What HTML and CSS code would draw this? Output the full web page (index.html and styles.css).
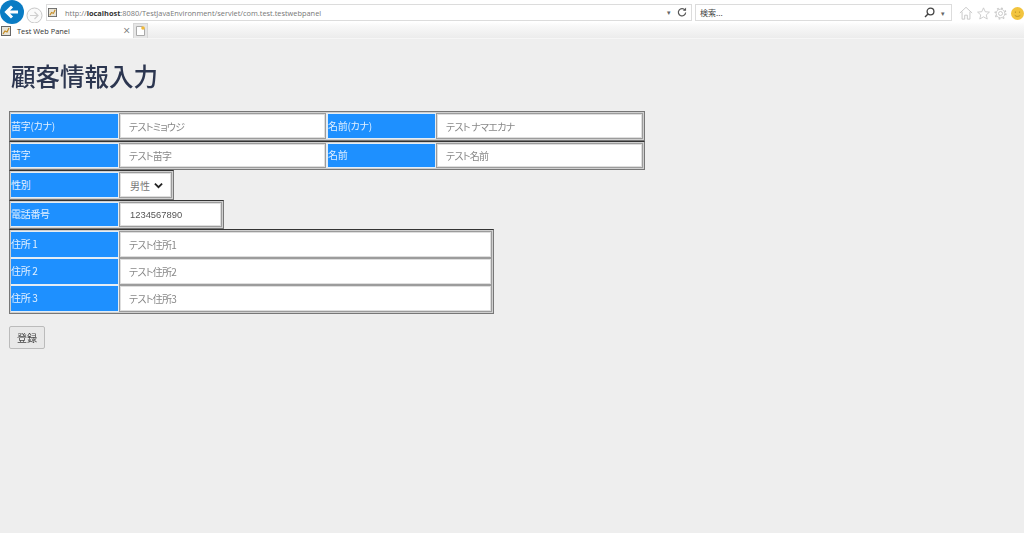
FILE: index.html
```html
<!DOCTYPE html>
<html lang="ja">
<head>
<meta charset="utf-8">
<title>Test Web Panel</title>
<link rel="stylesheet" href="styles.css">
</head>
<body>
<header class="chrome">
  <div class="navbar">
    <button class="back" aria-label="back"><svg width="24" height="24" viewBox="0 0 24 24"><circle cx="12" cy="12" r="12" fill="#0a7cc4"/><path d="M18 12H7.500M12 6.500L6.500 12l5.500 5.500" fill="none" stroke="#fff" stroke-width="3"/></svg></button>
    <span class="forward"><svg width="17" height="17" viewBox="0 0 17 17"><circle cx="8.500" cy="8.500" r="7.500" fill="#fafafa" stroke="#c8c8c8"/><path d="M4 8.500h8M8.500 5l3.500 3.500L8.500 12" fill="none" stroke="#cfcfcf" stroke-width="1.200"/></svg></span>
    <div class="address">
      <svg class="favicon" width="9" height="9" viewBox="0 0 10 10"><rect x=".5" y=".5" width="9" height="9" fill="#e8e4d8" stroke="#666"/><path d="M2 8l2-3 2 1 2-4" fill="none" stroke="#c58a20" stroke-width="1.200"/></svg>
      <span class="url">http://<b>localhost</b>:8080/TestJavaEnvironment/servlet/com.test.testwebpanel</span>
      <span class="caret">▾</span>
      <svg class="reload" width="10" height="11" viewBox="0 0 11 11"><path d="M8.800 3A4 4 0 1 0 9.500 5.500" fill="none" stroke="#555" stroke-width="1.300"/><path d="M6.500 3.500h3.500V0z" fill="#555"/></svg>
    </div>
    <div class="search">
      <span class="search-text">検索...</span>
      <svg width="11" height="11" viewBox="0 0 11 11"><circle cx="6.500" cy="4.500" r="3.400" fill="none" stroke="#444" stroke-width="1.300"/><path d="M4 7L1 10" stroke="#444" stroke-width="1.500"/></svg>
      <span class="caret">▾</span>
    </div>
    <div class="tools">
      <svg width="14" height="14" viewBox="0 0 16 16"><path d="M1 8l7-6.500L15 8M3.500 6.500V15h3v-4.500h3V15h3V6.500" fill="none" stroke="#c4c4c4"/></svg>
      <svg width="13" height="13" viewBox="0 0 16 16"><path d="M8 1l2.100 4.800 5.200.5-3.900 3.400 1.200 5.100L8 12.100l-4.600 2.700 1.200-5.100L.7 6.300l5.200-.5z" fill="none" stroke="#c4c4c4"/></svg>
      <svg width="13" height="13" viewBox="0 0 15 15"><circle cx="7.500" cy="7.500" r="2.300" fill="none" stroke="#c4c4c4"/><circle cx="7.500" cy="7.500" r="5" fill="none" stroke="#c4c4c4"/><circle cx="7.500" cy="7.500" r="6.300" fill="none" stroke="#c4c4c4" stroke-width="1.400" stroke-dasharray="2 2.950"/></svg>
      <svg width="13" height="13" viewBox="0 0 14 14"><circle cx="7" cy="7" r="7" fill="#f2c43e"/><circle cx="4.800" cy="5.500" r=".7" fill="#b08a20"/><circle cx="9.200" cy="5.500" r=".7" fill="#b08a20"/><path d="M4 9c1.500 1.500 4.500 1.500 6 0" fill="none" stroke="#b08a20" stroke-width=".8"/></svg>
    </div>
  </div>
  <div class="tabbar">
    <div class="tab">
      <svg width="10" height="10" viewBox="0 0 10 10"><rect x=".5" y=".5" width="9" height="9" fill="#e8e4d8" stroke="#666"/><path d="M2 8l2-3 2 1 2-4" fill="none" stroke="#c58a20" stroke-width="1.200"/></svg>
      <span class="tab-title">Test Web Panel</span>
      <span class="tab-close">×</span>
    </div>
    <div class="newtab"><svg width="9" height="10" viewBox="0 0 9 10"><path d="M.5.500h6l2 2v7h-8z" fill="#fff" stroke="#aaa"/><circle cx="7" cy="2" r="1.800" fill="#f0b93a"/></svg></div>
  </div>
</header>

<main class="page">
  <h1>顧客情報入力</h1>
  <form>
    <div class="group">
      <table>
        <tr>
          <th>苗字(カナ)</th><td><input class="w1" placeholder="テストミョウジ"></td>
          <th class="second">名前(カナ)</th><td><input class="w1" placeholder="テスト ナマエカナ"></td>
        </tr>
      </table>
      <table class="short">
        <tr>
          <th>苗字</th><td><input class="w1" placeholder="テスト苗字"></td>
          <th class="second">名前</th><td><input class="w1" placeholder="テスト名前"></td>
        </tr>
      </table>
      <table>
        <tr>
          <th>性別</th>
          <td><div class="select"><span>男性</span><svg width="9" height="7" viewBox="0 0 10 7"><path d="M1 1.300l4 4 4-4" fill="none" stroke="#222" stroke-width="2"/></svg></div></td>
        </tr>
      </table>
      <table class="short">
        <tr>
          <th>電話番号</th><td><input class="w2 filled" value="1234567890"></td>
        </tr>
      </table>
      <table class="stack">
        <tr><th>住所 1</th><td><input class="w3" placeholder="テスト住所1"></td></tr>
        <tr><th>住所 2</th><td><input class="w3" placeholder="テスト住所2"></td></tr>
        <tr><th>住所 3</th><td><input class="w3" placeholder="テスト住所3"></td></tr>
      </table>
    </div>
    <button type="button" class="submit">登録</button>
  </form>
</main>
</body>
</html>
```
FILE: styles.css
```css
* { box-sizing: border-box; }
html, body { margin: 0; height: 100%; }
body {
  background: #eeeeee;
  font-family: "Noto Sans CJK JP", "Liberation Sans", sans-serif;
  overflow: hidden;
  filter: blur(0.5px);
}
.chrome {
  height: 39px;
  background: linear-gradient(#ffffff 0, #ffffff 22px, #f8f8f8 26px, #ececec 38px);
  border-bottom: 1px solid #f6f6f6;
}
.navbar {
  display: flex;
  align-items: flex-start;
  height: 23px;
}
.back {
  width: 23px;
  height: 24px;
  margin: 0;
  padding: 0;
  border: 0;
  background: none;
  flex: none;
  position: relative;
  z-index: 1;
}
.forward { margin: 5px 0 0 3px; height: 17px; flex: none; }
.address {
  display: flex;
  align-items: center;
  width: 646px;
  height: 17px;
  margin: 4px 0 0 3px;
  border: 1px solid #dcdcdc;
  padding: 0 4px 0 1px;
  font: 7.400px "Open Sans", sans-serif;
  color: #777;
  background: #fff;
}
.url { margin-left: 8px; flex: 1; white-space: nowrap; }
.url b { color: #333; font-weight: 700; }
.caret { font-size: 7px; color: #666; }
.reload { margin-left: 6px; }
.search {
  display: flex;
  align-items: center;
  gap: 6px;
  width: 257px;
  height: 17px;
  margin: 4px 0 0 3px;
  border: 1px solid #dcdcdc;
  padding: 0 6px 0 4px;
  font: 8px "Noto Sans CJK JP", sans-serif;
  color: #444;
}
.search-text { flex: 1; }
.tools {
  display: flex;
  align-items: center;
  gap: 4px;
  margin: 5px 0 0 7px;
  height: 16px;
}
.tabbar { display: flex; align-items: stretch; height: 15px; }
.tab {
  display: flex;
  align-items: center;
  width: 133px;
  padding: 0 3px 0 1px;
  background: #fff;
  font: 7.400px "Open Sans", sans-serif;
  color: #333;
}
.tab-title { margin-left: 6px; flex: 1; }
.tab-close { font-size: 12px; color: #777; line-height: 1; }
.newtab {
  width: 15px;
  display: flex;
  align-items: center;
  justify-content: center;
  background: #e6e6e6;
  border: 1px solid #d6d6d6;
  border-bottom: 0;
}
.page { padding: 0 9px; }
h1 {
  margin: 19px 0 0 2px;
  height: 53px;
  font-size: 24.500px;
  line-height: 36px;
  font-weight: 500;
  color: #2c3650;
}
.group {
  display: flex;
  flex-direction: column;
  align-items: flex-start;
}
table {
  border: 1px solid #777;
  padding: 1px;
  background: #cfcfcf;
  border-spacing: 0;
  border-collapse: separate;
}
table + table { border-top-color: #333; }
th, td { padding: 0; }
th {
  width: 108px;
  height: 26px;
  background: #1e90ff;
  border: 1px solid #e4edf5;
  border-left: 0;
  color: #e2f0ff;
  font-size: 10px;
  font-weight: 400;
  text-align: left;
  padding-bottom: 2px;
  letter-spacing: -0.3px;
  font-feature-settings: "palt";
}
th.second { width: 110px; border-left: 2px solid #e4edf5; }
td { vertical-align: middle; }
input, .select {
  display: block;
  height: 26px;
  border: 1px solid #9c9c9c;
  box-shadow: inset 0 0 0 1px #dedede;
  background: #fff;
  padding: 0 0 0 9px;
  font: 10px "Noto Sans CJK JP", sans-serif;
  font-feature-settings: "palt";
  letter-spacing: -0.7px;
  color: #444;
  outline: 0;
}
.short th, .short input { height: 25px; }
.stack th, .stack input { height: 27px; }
input::placeholder { color: #888; opacity: 1; }
.filled { font-family: "Liberation Sans", sans-serif; font-size: 9.400px; color: #555; letter-spacing: 0; }
.w1 { width: 207px; }
.w2 { width: 103px; padding-left: 10px; }
.w3 { width: 373px; }
.select {
  width: 53px;
  display: flex;
  align-items: center;
  gap: 4px;
  padding: 0 0 0 10px;
  color: #777;
  letter-spacing: 0;
  white-space: nowrap;
}
.submit {
  display: block;
  width: 36px;
  height: 23px;
  margin-top: 12px;
  padding: 0;
  border: 1px solid #bbb;
  border-radius: 2px;
  background: #e8e8e8;
  font: 10px "Noto Sans CJK JP", sans-serif;
  color: #444;
}
```
